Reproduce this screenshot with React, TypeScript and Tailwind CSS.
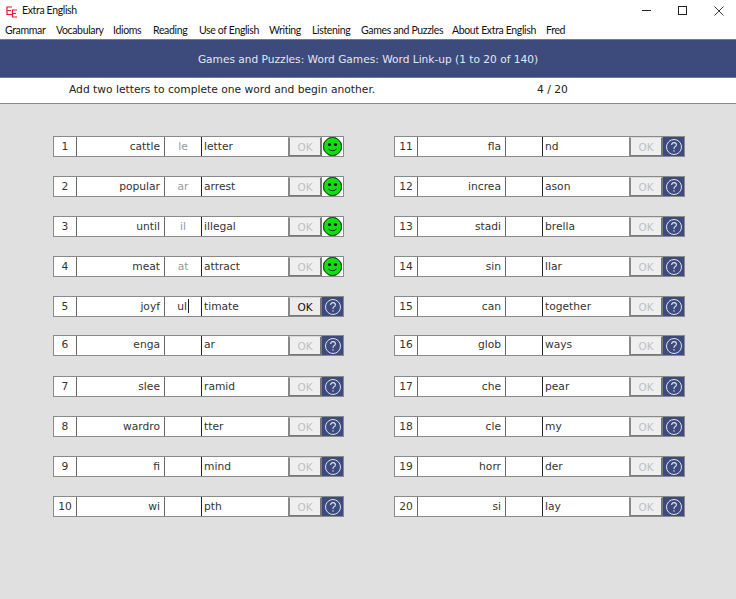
import React from "react";

const left: [string, string, string, string][] = [
  ["1", "cattle", "le", "letter"],
  ["2", "popular", "ar", "arrest"],
  ["3", "until", "il", "illegal"],
  ["4", "meat", "at", "attract"],
  ["5", "joyf", "ul", "timate"],
  ["6", "enga", "", "ar"],
  ["7", "slee", "", "ramid"],
  ["8", "wardro", "", "tter"],
  ["9", "fi", "", "mind"],
  ["10", "wi", "", "pth"],
];
const right: [string, string, string, string][] = [
  ["11", "fla", "", "nd"],
  ["12", "increa", "", "ason"],
  ["13", "stadi", "", "brella"],
  ["14", "sin", "", "llar"],
  ["15", "can", "", "together"],
  ["16", "glob", "", "ways"],
  ["17", "che", "", "pear"],
  ["18", "cle", "", "my"],
  ["19", "horr", "", "der"],
  ["20", "si", "", "lay"],
];

function Smiley() {
  return (
    <svg width="21" height="21" viewBox="0 0 21 21">
      <path d="M7 1.5H14L19.5 7V14L14 19.5H7L1.5 14V7Z" fill="#10e010" stroke="#10e010" strokeWidth="1" strokeLinejoin="round" />
      <circle cx="10.5" cy="10.5" r="9" fill="#10e010" stroke="#1a3a1a" strokeWidth="1" />
      <circle cx="7.5" cy="8.5" r="1.6" fill="#111" />
      <circle cx="13.5" cy="8.5" r="1.6" fill="#111" />
      <path d="M6.5 13 Q10.5 16.5 14.5 13" fill="none" stroke="#111" strokeWidth="1" />
    </svg>
  );
}

function Help() {
  return (
    <svg width="18" height="18" viewBox="0 0 18 18">
      <circle cx="9" cy="9" r="7.5" fill="none" stroke="#dfe2ee" strokeWidth="1" />
      <path d="M6.6 7 Q6.8 4.6 9 4.6 Q11.4 4.6 11.4 6.7 Q11.4 8 10 8.8 Q9 9.4 9 10.9" fill="none" stroke="#dfe2ee" strokeWidth="1.1" />
      <rect x="8.4" y="12.2" width="1.2" height="1.4" fill="#dfe2ee" />
    </svg>
  );
}

function Row({ r, done, active, cls }: { r: [string, string, string, string]; done: boolean; active: boolean; cls: string }) {
  return (
    <div className={`flex h-[21px] w-[291px] border border-[#8a8a8a] bg-white text-[10.7px] text-[#333] ${cls}`}>
      <div className="w-[23px] border-r border-[#666] text-center">{r[0]}</div>
      <div className="w-[88px] border-r border-[#666] pr-[4px] text-right">{r[1]}</div>
      <div className={`flex w-[37px] justify-center border-r border-[#222] ${active ? "text-[#333]" : "text-[#999]"}`}>
        {r[2]}
        {active && <span className="ml-[1px] mt-[2px] h-[14px] w-px bg-[#222]" />}
      </div>
      <div className="w-[86px] pl-[2px]">{r[3]}</div>
      <div
        className={`flex w-[34px] items-center justify-center border-y border-r-2 border-l-2 border-t-[#d8d8d8] border-b-[#777] border-r-[#777] border-l-[#888] text-[10.5px] ${
          active ? "bg-[#ececec] font-medium text-[#111]" : "bg-[#efefef] text-[#c0c0c0]"
        }`}
      >
        OK
      </div>
      <div className={`flex w-[21px] items-center justify-center ${done ? "bg-white" : "bg-[#3c4b7c]"}`}>
        {done ? <Smiley /> : <Help />}
      </div>
    </div>
  );
}

const offset = [
  "leading-[20px]",
  "leading-[20px]",
  "leading-[20px]",
  "leading-[20px]",
  "leading-[20px]",
  "mt-[-1px] leading-[18px]",
  "mt-[1px] leading-[20px]",
  "leading-[20px]",
  "leading-[20px]",
  "leading-[20px]",
];

function Column({ rows, score }: { rows: [string, string, string, string][]; score: boolean }) {
  return (
    <div className="flex flex-col gap-[19px]">
      {rows.map((r, i) => (
        <Row key={r[0]} r={r} done={score && i < 4} active={score && i === 4} cls={offset[i]} />
      ))}
    </div>
  );
}

const menu: [string, string][] = [
  ["Grammar", "w-[51px]"],
  ["Vocabulary", "w-[57px]"],
  ["Idioms", "w-[40px]"],
  ["Reading", "w-[46px]"],
  ["Use of English", "w-[70px]"],
  ["Writing", "w-[43px]"],
  ["Listening", "w-[49px]"],
  ["Games and Puzzles", "w-[91px]"],
  ["About Extra English", "w-[94px]"],
  ["Fred", "w-[24px]"],
];

export default function App() {
  const sans = { fontFamily: '"DejaVu Sans", sans-serif' };
  return (
    <div className="flex h-[599px] w-[736px] flex-col overflow-hidden bg-[#e0e0e0]" style={sans}>
      <div className="flex h-[21px] shrink-0 items-center bg-white pl-[6px] text-[#111]">
        <svg width="12" height="12" viewBox="0 0 12 12" className="mr-[4px] mt-[2px]">
          <path d="M6 1H1V8.5H6M1 4.5H5" fill="none" stroke="#f01030" strokeWidth="1.2" />
          <path d="M11 4H6.5V11H11M6.5 7.5H10" fill="none" stroke="#f01030" strokeWidth="1.2" />
        </svg>
        <span className="whitespace-nowrap pt-[1px] font-['Lato',sans-serif] text-[10.5px] tracking-[-0.35px]">Extra English</span>
        <div className="ml-auto flex h-full items-center">
          <div className="flex w-[36px] justify-center">
            <div className="h-px w-[9px] bg-[#222]" />
          </div>
          <div className="flex w-[37px] justify-center">
            <div className="h-[9px] w-[9px] border border-[#222]" />
          </div>
          <div className="flex w-[35px] justify-center">
            <svg width="10" height="10" viewBox="0 0 10 10">
              <path d="M0.5 0.5L9.5 9.5M9.5 0.5L0.5 9.5" stroke="#222" strokeWidth="0.9" />
            </svg>
          </div>
        </div>
      </div>
      <div className="flex h-[18px] shrink-0 items-center bg-white pl-[5px] pt-[2px] font-['Lato',sans-serif] text-[10.5px] tracking-[-0.35px] text-[#111]">
        {menu.map(([m, w]) => (
          <span key={m} className={`${w} whitespace-nowrap`}>{m}</span>
        ))}
      </div>
      <div className="flex h-[39px] shrink-0 items-center justify-center border-y border-[#6f7aa0] bg-[#3c4b7c] pt-[2px] text-[10.6px] text-[#e4e7f0]">
        Games and Puzzles: Word Games: Word Link-up (1 to 20 of 140)
      </div>
      <div className="flex h-[26px] shrink-0 items-center border-b border-[#8a8a8a] bg-white text-[10.7px] text-[#222]">
        <div className="ml-[69px] w-[468px]">Add two letters to complete one word and begin another.</div>
        <div>4 / 20</div>
      </div>
      <div className="flex gap-[50px] pl-[53px] pt-[32px]">
        <Column rows={left} score={true} />
        <Column rows={right} score={false} />
      </div>
    </div>
  );
}
